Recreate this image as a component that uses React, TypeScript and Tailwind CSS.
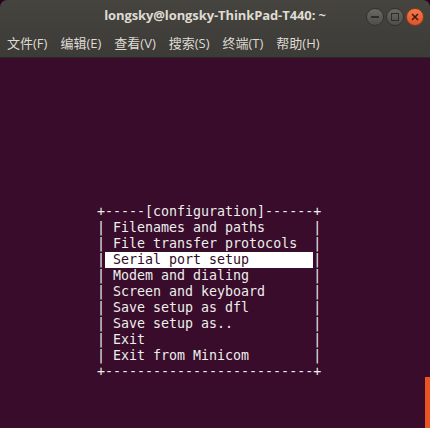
import React from "react";

const lines = [
  "Filenames and paths",
  "File transfer protocols",
  "Serial port setup",
  "Modem and dialing",
  "Screen and keyboard",
  "Save setup as dfl",
  "Save setup as..",
  "Exit",
  "Exit from Minicom",
];

export default function App() {
  const mono = { fontFamily: '"DejaVu Sans Mono", "Liberation Mono", monospace' };
  return (
    <div className="w-[430px] h-[428px] bg-[#2c001e] flex flex-col overflow-hidden" style={{ fontFamily: '"Open Sans", "Noto Sans CJK SC", sans-serif' }}>
      <div className="bg-gradient-to-b from-[#45443f] to-[#3c3b37] rounded-t-[7px] h-[58px] flex flex-col border-b border-[#2a2925]">
        <div className="h-[31px] relative flex items-center justify-center">
          <span className="text-[13px] font-bold text-[#dfdbd2] tracking-[-0.1px]">longsky@longsky-ThinkPad-T440: ~</span>
          <div className="absolute right-[6px] top-[8px] flex gap-[2px]">
            <div className="w-[18px] h-[18px] rounded-full bg-gradient-to-b from-[#6a6964] to-[#4f4e4a] border border-[#33322e] flex items-center justify-center">
              <div className="w-[8px] h-[1.5px] bg-[#2e2d29]" />
            </div>
            <div className="w-[18px] h-[18px] rounded-full bg-gradient-to-b from-[#6a6964] to-[#4f4e4a] border border-[#33322e] flex items-center justify-center">
              <div className="w-[8px] h-[8px] border-[1.5px] border-[#2e2d29]" />
            </div>
            <div className="w-[18px] h-[18px] rounded-full bg-gradient-to-b from-[#f47a4a] to-[#e0522a] border border-[#8a3a1e] flex items-center justify-center">
              <svg width="8" height="8" viewBox="0 0 8 8"><path d="M1 1L7 7M7 1L1 7" stroke="#3b1a0c" strokeWidth="1.5" /></svg>
            </div>
          </div>
        </div>
        <div className="flex items-center h-[26px] pl-[7px] gap-[13px] text-[13px] text-[#dfdbd2]">
          <span>文件(F)</span>
          <span>编辑(E)</span>
          <span>查看(V)</span>
          <span>搜索(S)</span>
          <span>终端(T)</span>
          <span>帮助(H)</span>
        </div>
      </div>
      <div className="flex-1 relative bg-[#380c2a]">
        <div className="pl-[97px] pt-[146px] text-[13.3px] leading-[16px] text-[#eeeeec] whitespace-pre" style={mono}>
          <div>{"+-----[configuration]------+"}</div>
          {lines.map((l, i) => (
            <div key={i} className="flex">
              <span>|</span>
              {i === 2 ? (
                <span className="bg-white text-[#300a24]">{" " + l.padEnd(25, " ")}</span>
              ) : (
                <span>{" " + l.padEnd(25, " ")}</span>
              )}
              <span>|</span>
            </div>
          ))}
          <div>{"+--------------------------+"}</div>
        </div>
        <div className="absolute right-0 bottom-0 w-[5px] h-[51px] bg-[#e95420]" />
      </div>
    </div>
  );
}
